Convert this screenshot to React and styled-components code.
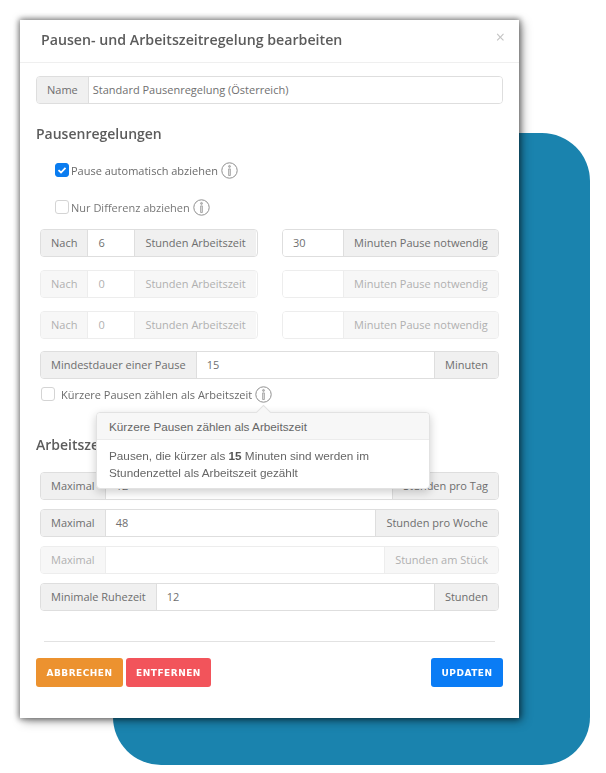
import React from "react";
import styled, { createGlobalStyle } from "styled-components";

const GlobalStyle = createGlobalStyle`
  html, body {
    margin: 0;
    padding: 0;
    background: #fff;
  }
  body {
    font-family: "Open Sans", "Liberation Sans", sans-serif;
    color: #6b6b6b;
  }
`;

const Stage = styled.div`
  position: relative;
  width: 606px;
  height: 773px;
  padding: 20px 0 0 20px;
  box-sizing: border-box;
  overflow: hidden;
  filter: blur(0.35px);
`;

const Backdrop = styled.div`
  position: absolute;
  left: 113px;
  top: 133px;
  width: 477px;
  height: 632px;
  border-radius: 48px;
  background: #1a83ae;
`;

const Modal = styled.div`
  position: relative;
  width: 499px;
  height: 698px;
  background: #fff;
  box-shadow: 0 0 6px 1px rgba(0, 0, 0, 0.5), 3px 3px 10px rgba(0, 0, 0, 0.35);
  display: flex;
  flex-direction: column;
`;

const Header = styled.div`
  height: 43px;
  flex: none;
  box-sizing: border-box;
  border-bottom: 1px solid #efefef;
  padding: 0 14px 3px 21px;
  display: flex;
  align-items: center;
  justify-content: space-between;
`;

const Title = styled.h1`
  margin: 0;
  font-size: 14.2px;
  font-weight: 600;
  color: #5c5c5c;
`;

const Close = styled.span`
  font-size: 16px;
  color: #c4c4c4;
  line-height: 1;
  margin-top: -5px;
`;

const Body = styled.div`
  flex: 1;
  padding: 13px 16px 0;
  display: flex;
  flex-direction: column;
`;

const SectionTitle = styled.h2`
  margin: ${(p) => p.$top}px 0 0;
  font-size: 14px;
  font-weight: 600;
  line-height: 20px;
  color: #5c5c5c;
`;

const Inset = styled.div`
  padding: 0 4px;
  display: flex;
  flex-direction: column;
`;

const Group = styled.div`
  display: flex;
  flex: none;
  height: 28px;
  width: ${(p) => (p.$width ? `${p.$width}px` : "auto")};
  margin-top: ${(p) => p.$top || 0}px;
  box-sizing: border-box;
  border: 1px solid #dedede;
  border-radius: 4px;
  overflow: hidden;
  font-size: 11px;
  opacity: ${(p) => (p.$disabled ? 0.55 : 1)};
`;

const Addon = styled.div`
  flex: ${(p) => (p.$fill ? "1" : "none")};
  display: flex;
  align-items: center;
  padding: 0 10px 1px;
  background: #f0f0f0;
  color: #6e6e6e;
  white-space: nowrap;
  border-left: ${(p) => (p.$fill ? "1px solid #dedede" : "none")};
`;

const Field = styled.div`
  flex: ${(p) => (p.$width ? "none" : "1")};
  width: ${(p) => (p.$width ? `${p.$width}px` : "auto")};
  box-sizing: border-box;
  display: flex;
  align-items: center;
  padding: 0 ${(p) => p.$pad || 10}px 1px;
  background: #fff;
  color: #707070;
  border-left: ${(p) => (p.$first ? "none" : "1px solid #dedede")};
  border-right: ${(p) => (p.$end ? "none" : "1px solid #dedede")};
`;

const Pair = styled.div`
  display: flex;
  justify-content: space-between;
  margin-top: ${(p) => p.$top}px;
`;

const CheckRow = styled.div`
  position: relative;
  display: flex;
  align-items: center;
  height: 20px;
  margin: ${(p) => p.$top}px 0 0 ${(p) => p.$left}px;
  font-size: 11px;
  color: ${(p) => (p.$dim ? "#777" : "#6b6b6b")};
`;

const Box = styled.span`
  width: 14px;
  height: 14px;
  flex: none;
  box-sizing: border-box;
  margin-right: ${(p) => p.$gap}px;
  border-radius: 3px;
  border: 1px solid ${(p) => (p.$checked ? "#0a7cf0" : "#d4d4d4")};
  background: ${(p) => (p.$checked ? "#0a7cf0" : "#fff")};
  display: flex;
  align-items: center;
  justify-content: center;
`;

const InfoSvg = styled.svg`
  width: 17px;
  height: 17px;
  margin-left: 3px;
  flex: none;
`;

const InfoIcon = () => (
  <InfoSvg viewBox="0 0 17 17" fill="none" stroke="#8f8f8f">
    <circle cx="8.5" cy="8.5" r="7.7" strokeWidth="1" />
    <circle cx="8.5" cy="4.4" r="1" fill="#bbb" strokeWidth="0.6" />
    <path d="M7.6 6.9h1.8v6.6H7.6z" fill="#e4e4e4" strokeWidth="0.7" />
  </InfoSvg>
);

const Tooltip = styled.div`
  position: absolute;
  left: 55px;
  top: 28px;
  width: 334px;
  height: 77px;
  box-sizing: border-box;
  background: #fff;
  border: 1px solid #e2e2e2;
  border-radius: 4px;
  box-shadow: 0 3px 10px rgba(0, 0, 0, 0.2);
  font-family: "Liberation Sans", Arial, sans-serif;
  font-size: 11.75px;
  color: #666;
  z-index: 2;

  &::before {
    content: "";
    position: absolute;
    left: 161px;
    top: -6px;
    width: 10px;
    height: 10px;
    background: #f7f7f7;
    border-left: 1px solid #e2e2e2;
    border-top: 1px solid #e2e2e2;
    transform: rotate(45deg);
  }
`;

const TooltipHead = styled.div`
  height: 27px;
  box-sizing: border-box;
  display: flex;
  align-items: center;
  padding: 0 12px;
  background: #f7f7f7;
  border-bottom: 1px solid #ececec;
  border-radius: 4px 4px 0 0;
  position: relative;
`;

const TooltipText = styled.div`
  padding: 7px 12px 0;
  line-height: 17px;

  b {
    color: #555;
  }
`;

const Divider = styled.div`
  height: 1px;
  background: #e2e2e2;
  margin: 30px 8px 0;
`;

const Footer = styled.div`
  display: flex;
  gap: 3px;
  margin-top: 16px;
`;

const Action = styled.button`
  height: 29px;
  width: ${(p) => p.$width}px;
  margin-left: ${(p) => (p.$push ? "auto" : "0")};
  border: none;
  border-radius: 3px;
  padding: 0;
  background: ${(p) => p.$bg};
  color: #fff;
  font-family: "DejaVu Sans", sans-serif;
  font-weight: 700;
  font-size: 9px;
  letter-spacing: 0.5px;
`;

const TimeRow = ({ top, disabled, hours, minutes }) => (
  <Pair $top={top}>
    <Group $width={218} $disabled={disabled}>
      <Addon>Nach</Addon>
      <Field $width={48}>{hours}</Field>
      <Addon>Stunden Arbeitszeit</Addon>
    </Group>
    <Group $width={217} $disabled={disabled}>
      <Field $width={60} $first $end>{minutes}</Field>
      <Addon $fill>Minuten Pause notwendig</Addon>
    </Group>
  </Pair>
);

const App = () => (
  <>
    <GlobalStyle />
    <Stage>
      <Backdrop />
      <Modal>
        <Header>
          <Title>Pausen- und Arbeitszeitregelung bearbeiten</Title>
          <Close>×</Close>
        </Header>
        <Body>
          <Group>
            <Addon>Name</Addon>
            <Field $pad={4} $end>Standard Pausenregelung (Österreich)</Field>
          </Group>
          <SectionTitle $top={20}>Pausenregelungen</SectionTitle>
          <CheckRow $top={16} $left={19}>
            <Box $gap={2} $checked>
              <svg width="10" height="10" viewBox="0 0 10 10" fill="none">
                <path d="M1.5 5.2 4 7.5 8.5 2.8" stroke="#fff" strokeWidth="1.8" />
              </svg>
            </Box>
            Pause automatisch abziehen
            <InfoIcon />
          </CheckRow>
          <CheckRow $top={17} $left={19} $dim>
            <Box $gap={2} />
            Nur Differenz abziehen
            <InfoIcon />
          </CheckRow>
          <Inset>
            <TimeRow top={12} hours="6" minutes="30" />
            <TimeRow top={13} disabled hours="0" />
            <TimeRow top={13} disabled hours="0" />
            <Group $top={12}>
              <Addon>Mindestdauer einer Pause</Addon>
              <Field>15</Field>
              <Addon>Minuten</Addon>
            </Group>
            <CheckRow $top={5} $left={1}>
              <Box $gap={6} />
              Kürzere Pausen zählen als Arbeitszeit
              <InfoIcon />
              <Tooltip>
                <TooltipHead>Kürzere Pausen zählen als Arbeitszeit</TooltipHead>
                <TooltipText>
                  Pausen, die kürzer als <b>15</b> Minuten sind werden im
                  <br />
                  Stundenzettel als Arbeitszeit gezählt
                </TooltipText>
              </Tooltip>
            </CheckRow>
          </Inset>
          <SectionTitle $top={31}>Arbeitszeitregelungen</SectionTitle>
          <Inset>
            <Group $top={17}>
              <Addon>Maximal</Addon>
              <Field>12</Field>
              <Addon>Stunden pro Tag</Addon>
            </Group>
            <Group $top={9}>
              <Addon>Maximal</Addon>
              <Field>48</Field>
              <Addon>Stunden pro Woche</Addon>
            </Group>
            <Group $top={9} $disabled>
              <Addon>Maximal</Addon>
              <Field />
              <Addon>Stunden am Stück</Addon>
            </Group>
            <Group $top={9}>
              <Addon>Minimale Ruhezeit</Addon>
              <Field>12</Field>
              <Addon>Stunden</Addon>
            </Group>
          </Inset>
          <Divider />
          <Footer>
            <Action $width={87} $bg="#ec922f">ABBRECHEN</Action>
            <Action $width={85} $bg="#f2545b">ENTFERNEN</Action>
            <Action $width={72} $bg="#0a7cf5" $push>UPDATEN</Action>
          </Footer>
        </Body>
      </Modal>
    </Stage>
  </>
);

export default App;
